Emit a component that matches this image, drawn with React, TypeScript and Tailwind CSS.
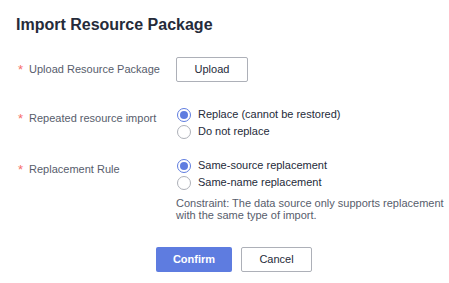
import React from 'react'

function Radio({ checked, label }: { checked?: boolean; label: string }) {
  return (
    <div className="flex h-[17px] items-center">
      <span
        className={
          checked
            ? 'ml-px flex h-[14px] w-[14px] items-center justify-center rounded-full border border-[#5e7ce0] bg-white'
            : 'ml-px flex h-[14px] w-[14px] items-center justify-center rounded-full border border-[#adb0b8] bg-white'
        }
      >
        {checked && <span className="h-[8px] w-[8px] rounded-full bg-[#5e7ce0]" />}
      </span>
      <span className="ml-[7px] text-[11px] leading-[17px] text-[#252b3a]">{label}</span>
    </div>
  )
}

function Label({ text, className = '' }: { text: string; className?: string }) {
  return (
    <div className={'flex w-[158px] shrink-0 items-center text-[11px] leading-[17px] text-[#575d6c] ' + className}>
      <span className="mr-[6px] text-[13px] leading-[17px] text-[#f66f6a]">*</span>
      {text}
    </div>
  )
}

export default function App() {
  return (
    <div className="h-[283px] w-[449px] overflow-hidden bg-white font-['Liberation_Sans',Arial,sans-serif]">
      <h1 className="pl-4 pt-[13px] text-[16px] font-bold leading-6 text-[#252b3a]">Import Resource Package</h1>

      <div className="pl-[18px]">
        <div className="mt-[20px] flex h-[25px] items-center">
          <Label text="Upload Resource Package" />
          <button className="h-[25px] w-[72px] rounded-[2px] border border-[#adb0b8] bg-white text-[11px] text-[#252b3a]">
            Upload
          </button>
        </div>

        <div className="mt-[24px] flex items-start">
          <Label text="Repeated resource import" className="pt-[4px]" />
          <div className="flex flex-col">
            <Radio checked label="Replace (cannot be restored)" />
            <Radio label="Do not replace" />
          </div>
        </div>

        <div className="mt-[17px] flex items-start">
          <Label text="Replacement Rule" className="pt-[4px]" />
          <div className="flex flex-col">
            <Radio checked label="Same-source replacement" />
            <Radio label="Same-name replacement" />
            <p className="mt-[6px] w-[270px] text-[11px] leading-[12px] text-[#575d6c]">
              Constraint: The data source only supports replacement with the same type of import.
            </p>
          </div>
        </div>
      </div>

      <div className="mt-[26px] flex gap-[9px] pl-[156px]">
        <button className="h-[25px] w-[76px] rounded-[2px] bg-[#5e7ce0] text-[11px] font-bold text-white">Confirm</button>
        <button className="h-[25px] w-[71px] rounded-[2px] border border-[#adb0b8] bg-white text-[11px] text-[#252b3a]">
          Cancel
        </button>
      </div>
    </div>
  )
}
